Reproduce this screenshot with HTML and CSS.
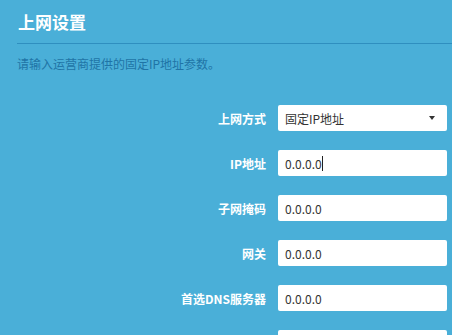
FILE: index.html
```html
<!DOCTYPE html>
<html lang="zh-CN">

<head>
    <meta charset="UTF-8">
    <meta name="viewport" content="width=device-width, initial-scale=1.0">
    <title>上网设置</title>
    <link rel="stylesheet" href="styles.css">
</head>

<body>
    <div class="panel">
        <div class="head">上网设置</div>
        <p class="tip">请输入运营商提供的固定IP地址参数。</p>
        <ul class="form">
            <li>
                <span class="label">上网方式</span>
                <div class="field select">
                    <span>固定IP地址</span>
                    <i class="arrow"></i>
                </div>
            </li>
            <li>
                <span class="label">IP地址</span>
                <div class="field"><span>0.0.0.0</span><i class="caret"></i></div>
            </li>
            <li>
                <span class="label">子网掩码</span>
                <div class="field"><span>0.0.0.0</span></div>
            </li>
            <li>
                <span class="label">网关</span>
                <div class="field"><span>0.0.0.0</span></div>
            </li>
            <li>
                <span class="label">首选DNS服务器</span>
                <div class="field"><span>0.0.0.0</span></div>
            </li>
            <li>
                <span class="label"></span>
                <div class="field"></div>
            </li>
        </ul>
    </div>
</body>

</html>
```

FILE: styles.css
```css
* {
    margin: 0;
    padding: 0;
    list-style: none;
}

body {
    background-color: #4aafd8;
    font-family: "Noto Sans CJK SC", "Noto Sans", sans-serif;
    overflow: hidden;
    height: 335px;
}

.panel {
    padding-left: 17px;
}

.head {
    height: 43px;
    line-height: 43px;
    border-bottom: 1px solid #2f8fbf;
    color: #fff;
    font-size: 17px;
    font-weight: bold;
    padding-left: 1px;
}

.tip {
    margin-top: 11px;
    font-size: 12px;
    line-height: 18px;
    color: #1f74a6;
}

.form {
    margin-top: 32px;
    display: flex;
    flex-direction: column;
    gap: 19px;
}

.form li {
    display: flex;
    align-items: center;
    height: 26px;
}

.label {
    width: 249px;
    text-align: right;
    font-size: 12px;
    font-weight: bold;
    color: #fff;
    margin-right: 12px;
}

.field {
    width: 169px;
    height: 26px;
    background-color: #fff;
    border-radius: 2px;
    display: flex;
    align-items: center;
    padding: 0 7px;
    box-sizing: border-box;
    font-size: 12px;
    color: #333;
}

.select {
    justify-content: space-between;
}

.arrow {
    width: 0;
    height: 0;
    border-left: 3px solid transparent;
    border-right: 3px solid transparent;
    border-top: 4px solid #333;
    margin-right: 5px;
}

.caret {
    width: 1px;
    height: 15px;
    background-color: #222;
}
```
